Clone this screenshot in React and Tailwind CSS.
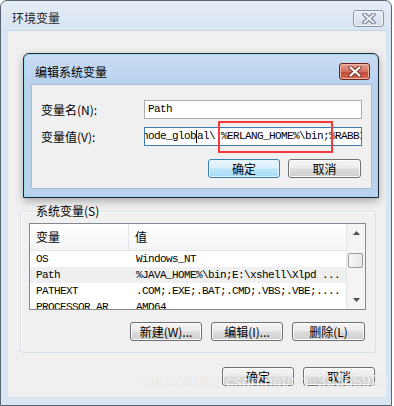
import React from 'react';

const cjk = "font-['Noto_Sans_CJK_SC',sans-serif]";
const mono = "font-['Liberation_Mono','Noto_Sans_CJK_SC',monospace] text-[11px] tracking-[-0.6px]";

const btnBase = `flex items-center justify-center h-[19px] rounded-[3px] border text-[12px] text-black ${cjk}`;
const btnGray = "border-[#707070] bg-[linear-gradient(#f4f4f4_0%,#ebebeb_48%,#dcdcdc_52%,#cfcfcf_100%)] shadow-[inset_0_0_0_1px_#fbfbfb]";
const btnBlue = "border-[#3c7fb1] bg-[linear-gradient(#eaf6fd_0%,#d9f0fc_48%,#bee6fd_52%,#a7d9f5_100%)] shadow-[inset_0_0_0_1px_#e3f4fc]";

const Btn = ({ children, width, focused }) => (
    <div className={`${btnBase} ${width} ${focused ? btnBlue : btnGray}`}>{children}</div>
);

// close "X" glyph used by both title bars
const CloseX = ({ fill, stroke }) => (
    <svg width="14" height="11" viewBox="0 0 14 11">
        <path d="M2.5 1.5 L11.5 9.5 M11.5 1.5 L2.5 9.5" stroke={stroke} strokeWidth="4.2" strokeLinecap="round" />
        <path d="M2.5 1.5 L11.5 9.5 M11.5 1.5 L2.5 9.5" stroke={fill} strokeWidth="2.2" strokeLinecap="round" />
    </svg>
);

const Arrow = ({ down }) => (
    <svg width="7" height="4" viewBox="0 0 7 4">
        <polygon points={down ? '0,0 7,0 3.5,4' : '0,4 7,4 3.5,0'} fill="#505050" />
    </svg>
);

const rows = [
    { name: 'OS', value: 'Windows_NT' },
    { name: 'Path', value: '%JAVA_HOME%\\bin;E:\\xshell\\Xlpd ...', selected: true },
    { name: 'PATHEXT', value: '.COM;.EXE;.BAT;.CMD;.VBS;.VBE;....' },
    { name: 'PROCESSOR_AR', value: 'AMD64' },
];

export default function App() {
    return (
        <div className="w-[394px] h-[406px] bg-white overflow-hidden">
            {/* Outer window: 环境变量 (inactive) */}
            <div className="relative w-[392px] h-[406px] flex flex-col border border-[#59636f] rounded-t-[7px] bg-[linear-gradient(#e4ecf6,#d9e5f2_30px,#d9e5f2)]">
                {/* Title bar */}
                <div className="h-[29px] flex justify-between pl-[11px] pr-[7px]">
                    <span className={`pt-[9px] text-[12px] leading-[16px] text-[#1f1f1f] ${cjk}`}>环境变量</span>
                    <div className="mt-[9px] w-[31px] h-[17px] rounded-[3px] border border-[#8b97a6] bg-[linear-gradient(#e9eff6,#d3dde9)] shadow-[inset_0_0_0_1px_#f3f6fa] flex items-center justify-center">
                        <CloseX fill="#eef1f5" stroke="#6e7885" />
                    </div>
                </div>

                {/* Client area */}
                <div className="relative ml-[7px] w-[378px] h-[367px] bg-[#f0f0f0] border-t border-[#c5d2e1] flex flex-col">
                    {/* user variables group, mostly hidden behind the dialog */}
                    <div className="h-[172px] pt-[15px] pl-[20px]">
                        <span className={`text-[12px] leading-[16px] text-black ${cjk}`}>Administrator 的用户变量(U)</span>
                    </div>

                    {/* System variables */}
                    <fieldset className="ml-[12px] w-[356px] h-[150px] border border-[#d5dfe5] rounded-[3px] px-[8px] pb-[11px] shadow-[inset_1px_1px_0_#ffffff]">
                        <legend className={`ml-[5px] px-[2px] text-[12px] leading-[16px] text-black ${cjk}`}>系统变量(S)</legend>

                        <div className="mt-[4px] w-[337px] h-[87px] border border-[#828790] bg-white flex overflow-hidden">
                            <div className="flex-1 flex flex-col overflow-hidden">
                                {/* header */}
                                <div className={`h-[27px] shrink-0 flex items-stretch bg-[linear-gradient(#ffffff,#f3f4f6)] border-b border-[#e2e3e5] text-[12px] text-black ${cjk}`}>
                                    <div className="w-[99px] pl-[6px] flex items-center border-r border-[#e2e3e5]">变量</div>
                                    <div className="pl-[6px] flex items-center">值</div>
                                </div>
                                {rows.map((r) => (
                                    <div key={r.name} className={`h-[16px] shrink-0 flex items-center text-black ${mono} ${r.selected ? 'bg-[#efefef]' : ''}`}>
                                        <div className="w-[100px] pl-[6px] whitespace-nowrap">{r.name}</div>
                                        <div className="pl-[6px] whitespace-nowrap">{r.value}</div>
                                    </div>
                                ))}
                            </div>
                            {/* scrollbar */}
                            <div className="w-[19px] shrink-0 flex flex-col bg-[#f4f4f4] border-l border-[#e4e4e4]">
                                <div className="h-[18px] flex items-center justify-center"><Arrow /></div>
                                <div className="mt-[11px] ml-[1px] w-[15px] h-[15px] rounded-[2px] border border-[#9a9a9a] bg-[linear-gradient(90deg,#f7f7f7,#e6e6e6)]" />
                                <div className="flex-1" />
                                <div className="h-[18px] flex items-center justify-center"><Arrow down /></div>
                            </div>
                        </div>

                        <div className="mt-[12px] flex justify-end gap-[9px] pr-[2px]">
                            <Btn width="w-[72px]">新建(W)...</Btn>
                            <Btn width="w-[72px]">编辑(I)...</Btn>
                            <Btn width="w-[73px]">删除(L)</Btn>
                        </div>
                    </fieldset>

                    <div className="mt-[14px] flex justify-end gap-[9px] pr-[11px]">
                        <Btn width="w-[72px]">确定</Btn>
                        <Btn width="w-[72px]">取消</Btn>
                    </div>

                    {/* Edit dialog: 编辑系统变量 (active, over the window) */}
                    <div className="absolute left-[15px] top-[22px] w-[356px] h-[145px] flex flex-col border border-[#1c2733] rounded-t-[6px] bg-[linear-gradient(#c9dcf1,#b9d2ee_30px,#b9d2ee)] shadow-[0_3px_8px_rgba(0,0,0,0.3),inset_0_0_0_1px_#9fd9f0]">
                        <div className="h-[30px] flex justify-between pl-[11px] pr-[8px]">
                            <span className={`pt-[10px] text-[12px] leading-[16px] text-black ${cjk}`}>编辑系统变量</span>
                            <div className="mt-[9px] w-[31px] h-[17px] rounded-[3px] border border-[#6d2118] bg-[linear-gradient(#e8a493,#d3705c_50%,#c14a34_52%,#cf6b54)] shadow-[inset_0_0_0_1px_#efb5a6] flex items-center justify-center">
                                <CloseX fill="#ffffff" stroke="#7a3026" />
                            </div>
                        </div>
                        <div className="relative ml-[7px] w-[341px] h-[105px] bg-[#f0f0f0] border border-[#a7bdd6] flex flex-col pl-[9px] pr-[9px]">
                            <div className="mt-[15px] flex items-center justify-between">
                                <span className={`text-[12px] text-black ${cjk}`}>变量名(N):</span>
                                <div className="w-[218px] h-[19px] border border-[#abadb3] bg-white flex items-center pl-[3px]">
                                    <span className={`text-black ${mono}`}>Path</span>
                                </div>
                            </div>
                            <div className="mt-[8px] flex items-center justify-between">
                                <span className={`text-[12px] text-black ${cjk}`}>变量值(V):</span>
                                <div className="w-[218px] h-[19px] border border-[#3d7bad] bg-white flex items-center overflow-hidden">
                                    <span className={`ml-[-3px] whitespace-nowrap flex items-center text-black ${mono}`}>
                                        node_glob<span className="inline-block w-px h-[13px] bg-black" />al\ %ERLANG_HOME%\bin;%RABBITMQ_SERVER%\sbin
                                    </span>
                                </div>
                            </div>
                            <div className="mt-[13px] flex justify-end gap-[8px] pr-[1px]">
                                <Btn width="w-[72px]" focused>确定</Btn>
                                <Btn width="w-[73px]">取消</Btn>
                            </div>
                            {/* red highlight box */}
                            <div className="absolute left-[186px] top-[36px] w-[115px] h-[32px] border-2 border-[#fa3a3a]" />
                        </div>
                    </div>
                </div>

                {/* watermark */}
                <div className="absolute left-[142px] top-[371px] text-[16px] leading-[20px] whitespace-nowrap text-white/80 font-['Liberation_Sans',Arial,sans-serif] [text-shadow:0_0_1px_rgba(0,0,0,0.18)]">
                    https://blog.csdn.net/qq_39365923
                </div>
            </div>
        </div>
    );
}
